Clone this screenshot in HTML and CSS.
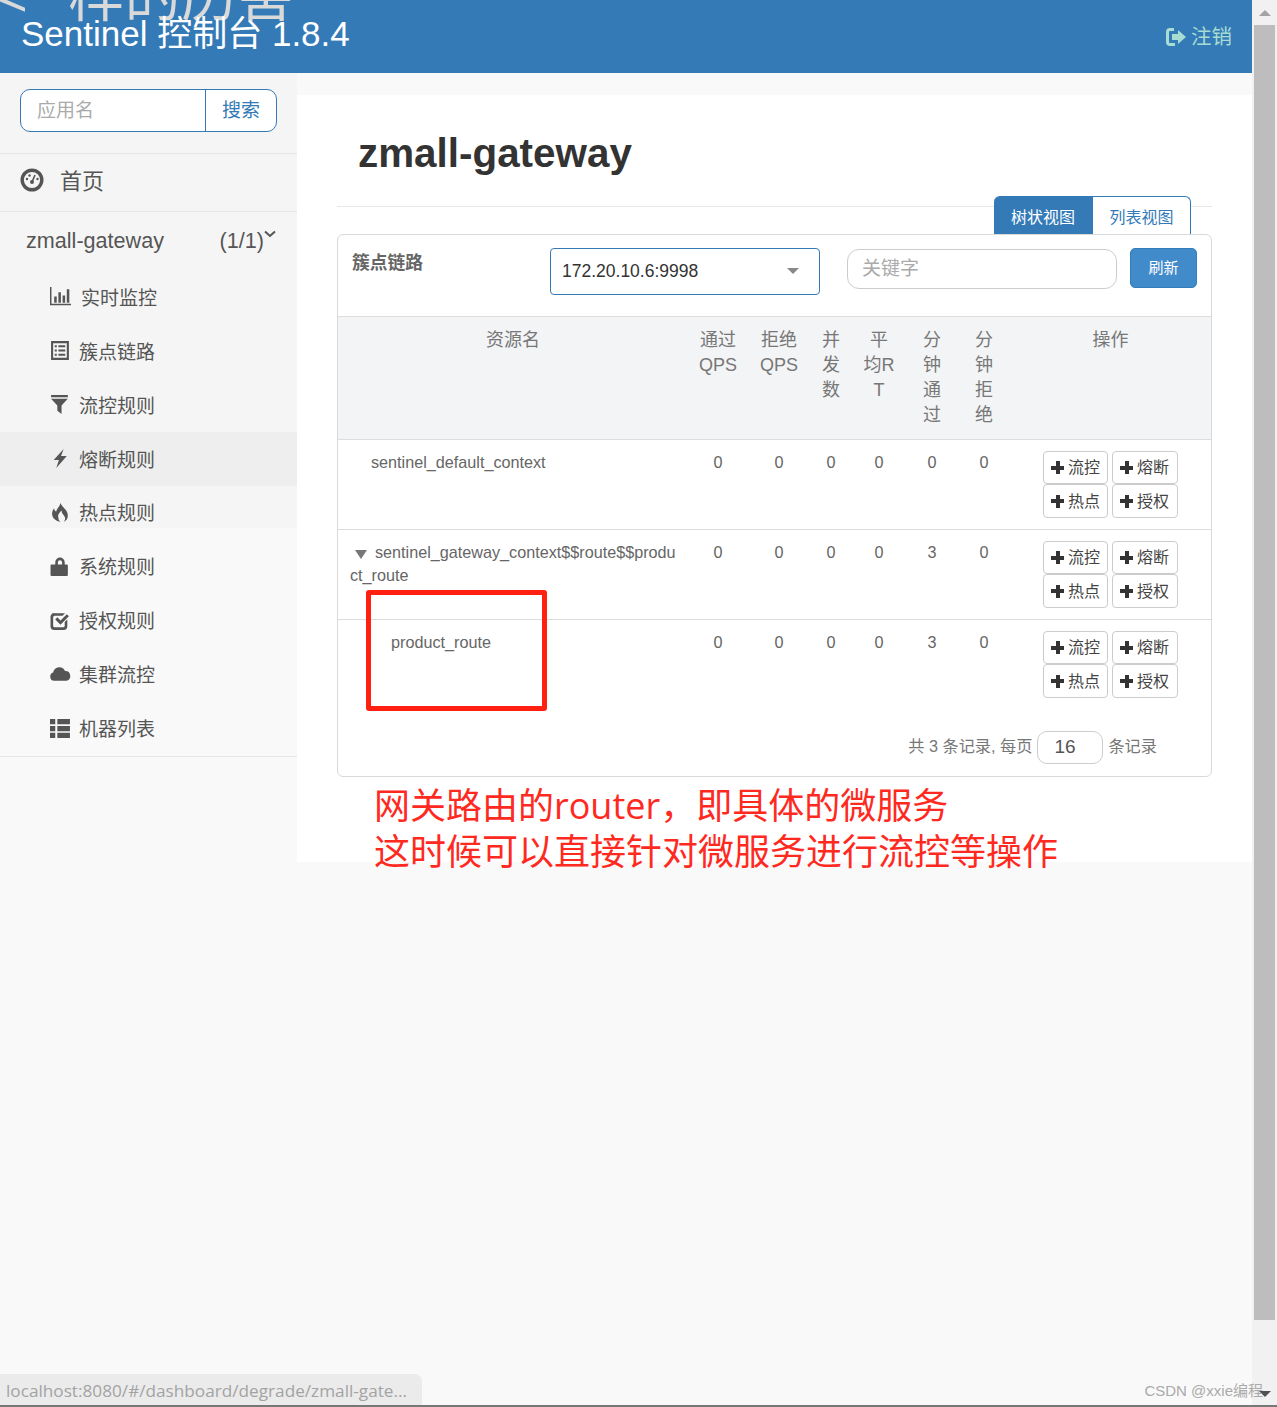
FILE: index.html
```html
<!DOCTYPE html>
<html lang="en">
<head>
    <meta charset="UTF-8">
    <title>Sentinel 控制台</title>
    <link rel="stylesheet" href="styles.css">
</head>
<body>
<div class="window">
    <div class="viewport">
        <header class="topbar">
            <div class="stray-text">&lt;&nbsp;&nbsp;样的历害</div>
            <div class="brand">Sentinel 控制台 1.8.4</div>
            <a class="logout">
                <svg class="logout-icon" viewBox="0 0 22 20"><path d="M9 1H5a4 4 0 0 0-4 4v10a4 4 0 0 0 4 4h5v-3H5a1 1 0 0 1-1-1V5a1 1 0 0 1 1-1h4z"/><path d="M7 7h6V3l8 7-8 7v-4H7z"/></svg>注销
            </a>
        </header>

        <div class="layout">
            <aside class="sidebar">
                <div class="search-wrap">
                    <div class="search">
                        <div class="search-input">应用名</div>
                        <div class="search-btn">搜索</div>
                    </div>
                </div>
                <div class="home-row">
                    <svg class="home-icon" viewBox="0 0 24 24"><circle cx="12" cy="12" r="9.8" fill="none" stroke="#555" stroke-width="3.4"/><circle cx="12" cy="14" r="2" fill="#555"/><path d="M12 14l3-7" stroke="#555" stroke-width="1.6"/><circle cx="7" cy="11" r="1.2" fill="#555"/><circle cx="9.5" cy="7.5" r="1.2" fill="#555"/><circle cx="17.5" cy="11" r="1.2" fill="#555"/></svg>
                    <span>首页</span>
                </div>
                <div class="app-row">
                    <span>zmall-gateway</span>
                    <span class="app-count">(1/1)<svg class="chev" viewBox="0 0 12 8"><path d="M1 1.5l5 4.5 5-4.5" fill="none" stroke="#555" stroke-width="2"/></svg></span>
                </div>
                <nav class="menu">
                    <div class="menu-item first-item">
                        <svg class="ico" viewBox="0 0 20 18"><path d="M0 0h1.4v16H20v1.4H0z"/><path d="M4 9h2.4v6H4zM8 5h2.4v10H8zM12 8h2.4v7H12zM16 2h2.4v13H16z"/></svg>
                        <span>实时监控</span>
                    </div>
                    <div class="menu-item">
                        <svg class="ico" viewBox="0 0 20 18"><path fill-rule="evenodd" d="M1 0h17v18H1zM3 2v14h13V2z"/><path d="M4.5 4h2v2h-2zM8 4h6.500v2H8zM4.500 8h2v2h-2zM8 8h6.500v2H8zM4.500 12h2v2h-2zM8 12h6.500v2H8z"/></svg>
                        <span>簇点链路</span>
                    </div>
                    <div class="menu-item">
                        <svg class="ico" viewBox="0 0 20 18"><path d="M1 0h16v2H1zM1 3.500h16l-6 6.500v8l-4-3v-5z"/></svg>
                        <span>流控规则</span>
                    </div>
                    <div class="menu-item active-item">
                        <svg class="ico" viewBox="0 0 20 18"><path d="M13 0L3.500 10.500h5L6 18 16 6.500h-5.500z"/></svg>
                        <span>熔断规则</span>
                    </div>
                    <div class="menu-item">
                        <svg class="ico" viewBox="0 0 20 18"><path d="M10 0c1 4 7 6 7 12 0 3-2 5-4 6 1-1 2-3 1-5-1-2-3-3-3-6-2 2-4 4-3 7 0 2 1 3 2 4-4-1-8-3-8-8 0-2 1-4 2-5 0 2 1 3 2 3C6 6 9 4 10 0z"/></svg>
                        <span>热点规则</span>
                    </div>
                    <div class="menu-item">
                        <svg class="ico" viewBox="0 0 20 18"><path fill-rule="evenodd" d="M5 7V5a4.500 4.500 0 0 1 9 0v2h2a1 1 0 0 1 1 1v9a1 1 0 0 1-1 1H1.500a1 1 0 0 1-1-1V8a1 1 0 0 1 1-1zm2.500 0h4V5a2 2 0 0 0-4 0z"/></svg>
                        <span>系统规则</span>
                    </div>
                    <div class="menu-item">
                        <svg class="ico" viewBox="0 0 20 18"><path d="M14 10.500V14a1.500 1.500 0 0 1-1.500 1.500h-8A1.500 1.500 0 0 1 3 14V6a1.500 1.500 0 0 1 1.500-1.500H12l2.300-2.300c-.5-.2-1-.2-1.500-.2H4.500A3.500 3.500 0 0 0 .5 6v8.500A3.500 3.500 0 0 0 4 18h9a3.500 3.500 0 0 0 3.500-3.500V8z"/><path d="M5 8l2-2 3 3 6-6 2 2-8 8z"/></svg>
                        <span>授权规则</span>
                    </div>
                    <div class="menu-item">
                        <svg class="ico" viewBox="0 0 20 18"><path d="M4 15a4 4 0 0 1-1-7.800C3.500 4 6 2 9 2c2.500 0 4.500 1.500 5.300 3.700A4.700 4.700 0 0 1 15.500 15z"/></svg>
                        <span>集群流控</span>
                    </div>
                    <div class="menu-item">
                        <svg class="ico" viewBox="0 0 20 18"><path d="M0 0h5v5H0zM7 0h12v5H7zM0 6.500h5v5H0zM7 6.500h12v5H7zM0 13h5v5H0zM7 13h12v5H7z"/></svg>
                        <span>机器列表</span>
                    </div>
                </nav>
            </aside>

            <main class="content">
                <h1 class="page-title">zmall-gateway</h1>
                <div class="view-tabs">
                    <div class="view-tab tab-on">树状视图</div>
                    <div class="view-tab">列表视图</div>
                </div>
                <section class="card">
                    <div class="toolbar">
                        <div class="toolbar-label">簇点链路</div>
                        <div class="machine-select">172.20.10.6:9998<i class="caret"></i></div>
                        <div class="keyword">关键字</div>
                        <div class="refresh">刷新</div>
                    </div>
                    <table class="res-table">
                        <colgroup>
                            <col class="c-name"><col class="c-pass"><col class="c-block"><col class="c-conc"><col class="c-rt"><col class="c-min"><col class="c-min"><col>
                        </colgroup>
                        <thead>
                            <tr>
                                <th>资源名</th>
                                <th>通过<br>QPS</th>
                                <th>拒绝<br>QPS</th>
                                <th>并发数</th>
                                <th>平均RT</th>
                                <th>分钟通过</th>
                                <th>分钟拒绝</th>
                                <th>操作</th>
                            </tr>
                        </thead>
                        <tbody>
                            <tr>
                                <td class="name-cell"><span class="indent-1">sentinel_default_context</span></td>
                                <td>0</td><td>0</td><td>0</td><td>0</td><td>0</td><td>0</td>
                                <td class="ops-cell">
                                    <div class="ops">
                                        <div class="op"><b class="plus"></b>流控</div><div class="op"><b class="plus"></b>熔断</div>
                                        <div class="op"><b class="plus"></b>热点</div><div class="op"><b class="plus"></b>授权</div>
                                    </div>
                                </td>
                            </tr>
                            <tr>
                                <td class="name-cell"><i class="tree-arrow"></i>sentinel_gateway_context$$route$$produ<br>ct_route</td>
                                <td>0</td><td>0</td><td>0</td><td>0</td><td>3</td><td>0</td>
                                <td class="ops-cell">
                                    <div class="ops">
                                        <div class="op"><b class="plus"></b>流控</div><div class="op"><b class="plus"></b>熔断</div>
                                        <div class="op"><b class="plus"></b>热点</div><div class="op"><b class="plus"></b>授权</div>
                                    </div>
                                </td>
                            </tr>
                            <tr>
                                <td class="name-cell"><span class="indent-2">product_route</span></td>
                                <td>0</td><td>0</td><td>0</td><td>0</td><td>3</td><td>0</td>
                                <td class="ops-cell">
                                    <div class="ops">
                                        <div class="op"><b class="plus"></b>流控</div><div class="op"><b class="plus"></b>熔断</div>
                                        <div class="op"><b class="plus"></b>热点</div><div class="op"><b class="plus"></b>授权</div>
                                    </div>
                                </td>
                            </tr>
                        </tbody>
                    </table>
                    <div class="pager">
                        <span>共 3 条记录, 每页</span>
                        <div class="page-size">16</div>
                        <span>条记录</span>
                    </div>
                </section>
            </main>
        </div>

        <!-- annotation drawn over the screenshot -->
        <div class="red-box"></div>
        <div class="note">网关路由的router，即具体的微服务<br>这时候可以直接针对微服务进行流控等操作</div>

        <div class="status-url">localhost:8080/#/dashboard/degrade/zmall-gate...</div>
    </div>
    <div class="scrollbar">
        <i class="sb-up"></i>
        <div class="sb-thumb"></div>
        <i class="sb-down"></i>
    </div>
    <div class="watermark">CSDN @xxie编程</div>
</div>
</body>
</html>
```

FILE: styles.css
```css
* {
    margin: 0;
    padding: 0;
    box-sizing: border-box;
}

html, body {
    height: 100%;
    overflow: hidden;
}

body {
    font-family: "Liberation Sans", "Noto Sans CJK SC", sans-serif;
    color: #666;
    background-color: #f9f9f9;
}

.window {
    position: relative;
    display: flex;
    height: 1407px;
    border-bottom: 2px solid #777;
}

.viewport {
    flex: 1;
    position: relative;
    overflow: hidden;
}

/* top bar */
.topbar {
    position: relative;
    height: 73px;
    background-color: #337ab7;
    overflow: hidden;
}

.stray-text {
    position: absolute;
    left: -5px;
    top: -35px;
    font-size: 56px;
    line-height: 64px;
    letter-spacing: 0.5px;
    word-spacing: 4px;
    color: #d9d9d9;
    white-space: nowrap;
}

.brand {
    position: absolute;
    left: 21px;
    top: 13px;
    font-size: 35px;
    line-height: 42px;
    color: #fff;
    white-space: nowrap;
}

.logout {
    position: absolute;
    right: 20px;
    top: 23px;
    display: flex;
    align-items: center;
    gap: 4px;
    font-size: 20.500px;
    line-height: 28px;
    color: #a6dcd2;
}

.logout-icon {
    width: 22px;
    height: 20px;
    fill: #a6dcd2;
}

.layout {
    display: flex;
}

/* sidebar */
.sidebar {
    width: 297px;
    flex-shrink: 0;
    color: #555;
}

.search-wrap {
    padding: 16px 20px 21px;
    height: 81px;
    background-color: #f5f5f5;
    border-bottom: 1px solid #e5e5e5;
}

.search {
    display: flex;
    height: 43px;
    width: 257px;
    border: 1px solid #337ab7;
    border-radius: 10px;
    background-color: #fff;
    font-size: 19px;
}

.search-input {
    width: 185px;
    padding-left: 16px;
    line-height: 41px;
    color: #aaa;
    border-right: 1px solid #337ab7;
}

.search-btn {
    flex: 1;
    text-align: center;
    line-height: 42px;
    color: #337ab7;
}

.home-row {
    display: flex;
    align-items: center;
    height: 58px;
    padding-left: 20px;
    background-color: #f5f5f5;
    border-bottom: 1px solid #e5e5e5;
    font-size: 22px;
}

.home-row span {
    margin: -8px 0 0 16px;
}

.home-icon {
    width: 24px;
    height: 24px;
    margin-top: -5px;
}

.app-row {
    display: flex;
    justify-content: space-between;
    align-items: center;
    height: 58px;
    padding: 0 21px 0 26px;
    background-color: #f5f5f5;
    font-size: 21.600px;
}

.chev {
    width: 12px;
    height: 8px;
    margin-bottom: 10px;
}

.menu {
    border-bottom: 1px solid #e5e5e5;
    height: 487px;
}

.menu-item {
    display: flex;
    align-items: center;
    height: 54px;
    padding-left: 50px;
    font-size: 19px;
}

.menu-item span {
    margin: -2px 0 0 8px;
}

.menu-item:nth-child(-n+4) {
    background-color: #f5f5f5;
}

.menu-item:nth-child(n+5) {
    height: 53.900px;
}

/* the shaded part of the sidebar stops partway down this row */
.menu-item:nth-child(5) {
    background: linear-gradient(#f5f5f5 42px, transparent 42px);
}

.menu-item.active-item {
    background-color: #eee;
}

.first-item span {
    margin-left: 10px;
}

.ico {
    width: 21px;
    height: 19px;
    fill: #555;
    margin-top: -1px;
}

/* main panel */
.content {
    flex: 1;
    height: 767px;
    margin-top: 22px;
    padding: 0 40px;
    background-color: #fff;
}

.page-title {
    height: 112px;
    padding: 35px 0 0 21px;
    font-size: 40.400px;
    line-height: 46px;
    font-weight: bold;
    color: #333;
    border-bottom: 1px solid #e8e8e8;
}

.view-tabs {
    display: flex;
    justify-content: flex-end;
    margin: -11px 21px 0 0;
    height: 39px;
    position: relative;
}

.view-tab {
    width: 98px;
    text-align: center;
    font-size: 16px;
    line-height: 42px;
    color: #337ab7;
    background-color: #fff;
    border: 1px solid #337ab7;
    border-bottom: 0;
    border-left: 0;
    border-radius: 0 6px 0 0;
}

.tab-on {
    width: 99px;
    color: #fff;
    background-color: #337ab7;
    border-radius: 6px 0 0 0;
}

.card {
    height: 543px;
    border: 1px solid #d9d9d9;
    border-radius: 6px;
    background-color: #fff;
    margin-top: -1px;
    position: relative;
}

.toolbar {
    display: flex;
    height: 81px;
    padding: 13px 14px 0;
    align-items: flex-start;
}

.toolbar-label {
    width: 198px;
    font-size: 17.800px;
    line-height: 30px;
    font-weight: bold;
    color: #666;
}

.machine-select {
    position: relative;
    width: 270px;
    height: 47px;
    margin-right: 27px;
    padding-left: 11px;
    border: 1px solid #337ab7;
    border-radius: 4px;
    font-size: 17.500px;
    line-height: 44px;
    color: #333;
}

.caret {
    position: absolute;
    right: 20px;
    top: 19px;
    border-left: 6px solid transparent;
    border-right: 6px solid transparent;
    border-top: 6px solid #888;
}

.keyword {
    width: 270px;
    height: 40px;
    margin: 1px 13px 0 0;
    padding-left: 14px;
    border: 1px solid #ccc;
    border-radius: 12px;
    font-size: 19px;
    line-height: 38px;
    color: #aaa;
}

.refresh {
    width: 67px;
    height: 40px;
    text-align: center;
    font-size: 15px;
    line-height: 38px;
    color: #fff;
    background-color: #428bca;
    border: 1px solid #357ebd;
    border-radius: 5px;
}

.res-table {
    width: 100%;
    table-layout: fixed;
    border-collapse: collapse;
}

.c-name { width: 350px; }
.c-pass { width: 60px; }
.c-block { width: 62px; }
.c-conc { width: 42px; }
.c-rt { width: 54px; }
.c-min { width: 52px; }

.res-table th {
    height: 123px;
    padding: 11px 10px 0;
    vertical-align: top;
    font-size: 18px;
    line-height: 25px;
    font-weight: normal;
    color: #777;
    background-color: #f3f4f6;
    border-top: 1px solid #ddd;
    border-bottom: 1px solid #ddd;
    word-break: break-all;
}

.res-table td {
    height: 90px;
    padding: 11px 0 0;
    vertical-align: top;
    text-align: center;
    font-size: 16.200px;
    line-height: 23px;
    border-bottom: 1px solid #ddd;
}

.res-table tr:last-child td {
    border-bottom: 0;
}

.res-table td.name-cell {
    text-align: left;
    padding: 11px 0 0 12px;
    word-break: break-all;
}

.res-table td.ops-cell {
    padding: 11px 0 0;
}

.indent-1 { margin-left: 21px; }
.indent-2 { margin-left: 41px; }

.tree-arrow {
    display: inline-block;
    margin: 0 8px 0 5px;
    border-left: 6.500px solid transparent;
    border-right: 6.500px solid transparent;
    border-top: 9px solid #777;
    vertical-align: -1px;
}

.ops {
    display: grid;
    grid-template-columns: 65px 66px;
    grid-template-rows: 33px 34px;
    column-gap: 4px;
    margin-left: 33px;
}

.op {
    display: flex;
    align-items: center;
    padding-left: 7px;
    font-size: 16px;
    color: #444;
    border: 1px solid #ccc;
    border-radius: 4px;
    background-color: #fff;
}

.plus {
    position: relative;
    width: 13px;
    height: 13px;
    margin-right: 4px;
    flex-shrink: 0;
}

.plus::before,
.plus::after {
    content: "";
    position: absolute;
    background-color: #333;
}

.plus::before {
    left: 0;
    right: 0;
    top: 4.500px;
    height: 4px;
}

.plus::after {
    top: 0;
    bottom: 0;
    left: 4.500px;
    width: 4px;
}

.pager {
    display: flex;
    align-items: center;
    justify-content: flex-end;
    height: 66px;
    padding: 10px 54px 0 0;
    font-size: 16.200px;
    color: #777;
}

.pager span {
    margin-bottom: 5px;
}

.page-size {
    width: 66px;
    height: 33px;
    margin: 0 5px;
    padding-left: 16px;
    font-size: 19px;
    line-height: 29px;
    color: #555;
    border: 1px solid #ccc;
    border-radius: 10px;
}

/* overlays */
.red-box {
    position: absolute;
    left: 366px;
    top: 590px;
    width: 181px;
    height: 121px;
    border: 5px solid #ff2012;
    border-radius: 3px;
}

.note {
    position: absolute;
    left: 374px;
    top: 783px;
    font-size: 36px;
    line-height: 46px;
    color: #ff2a1f;
    white-space: nowrap;
    font-family: "Open Sans", "Noto Sans CJK SC", sans-serif;
}

.status-url {
    position: absolute;
    left: 0;
    bottom: 0;
    width: 422px;
    height: 31px;
    padding-left: 6px;
    font-family: "Open Sans", "Noto Sans", sans-serif;
    font-size: 17.200px;
    line-height: 34px;
    color: #a3a3a3;
    background-color: #ebebeb;
    border-radius: 0 7px 0 0;
    white-space: nowrap;
}

.watermark {
    position: absolute;
    right: 14px;
    bottom: 4px;
    font-size: 15px;
    line-height: 20px;
    color: #aaa;
    white-space: nowrap;
}

.scrollbar {
    position: relative;
    width: 25px;
    background-color: #f1f1f1;
    padding: 25px 2px 0;
}

.sb-thumb {
    height: 1295px;
    background-color: #bdbdbd;
}

.sb-up {
    position: absolute;
    left: 7px;
    top: 10px;
    border-left: 6px solid transparent;
    border-right: 6px solid transparent;
    border-bottom: 6px solid #a3a3a3;
}

.sb-down {
    position: absolute;
    left: 7px;
    bottom: 8px;
    border-left: 6px solid transparent;
    border-right: 6px solid transparent;
    border-top: 6px solid #505050;
}
```
